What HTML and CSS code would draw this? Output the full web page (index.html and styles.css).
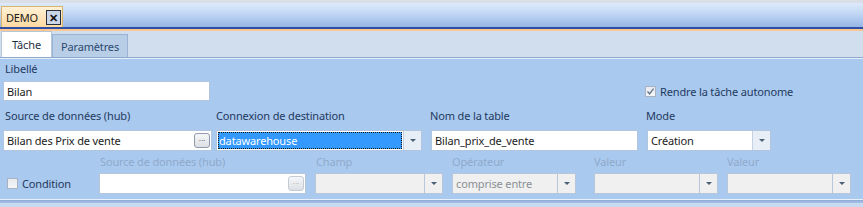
FILE: index.html
```html
<!DOCTYPE html>
<html lang="fr">
<head>
<meta charset="utf-8">
<link rel="stylesheet" href="styles.css">
</head>
<body>
<div class="doc-bar">
  <div class="doc-tab"><span class="doc-title">DEMO</span><span class="doc-close">✕</span></div>
</div>
<div class="doc-line"></div>
<div class="tab-strip">
  <div class="tab active">Tâche</div>
  <div class="tab">Paramètres</div>
</div>
<div class="panel">
  <div class="row lbl-row1"><span class="lbl">Libellé</span></div>
  <div class="row in-row1">
    <div class="field w-libelle"><span class="val">Bilan</span></div>
    <label class="check autonome"><span class="box checked"><svg viewBox="0 0 9 9" width="9" height="9"><path d="M1.5 4.5 L3.6 6.8 L7.6 1.6" fill="none" stroke="#6b7a8f" stroke-width="1.4"/></svg></span><span class="check-text">Rendre la tâche autonome</span></label>
  </div>
  <div class="row lbl-row2">
    <span class="lbl c1">Source de données (hub)</span>
    <span class="lbl c2">Connexion de destination</span>
    <span class="lbl c3">Nom de la table</span>
    <span class="lbl c4">Mode</span>
  </div>
  <div class="row in-row2">
    <div class="field w-source"><span class="val">Bilan des Prix de vente</span><span class="ellipsis">...</span></div>
    <div class="field combo w-conn"><span class="val sel">datawarehouse</span><span class="drop"><i class="arrow"></i></span></div>
    <div class="field w-table"><span class="val">Bilan_prix_de_vente</span></div>
    <div class="field combo w-mode"><span class="val">Création</span><span class="drop"><i class="arrow"></i></span></div>
  </div>
  <div class="row lbl-row3">
    <span class="lbl dis d1">Source de données (hub)</span>
    <span class="lbl dis d2">Champ</span>
    <span class="lbl dis d3">Opérateur</span>
    <span class="lbl dis d4">Valeur</span>
    <span class="lbl dis d5">Valeur</span>
  </div>
  <div class="row in-row3">
    <label class="check condition"><span class="box"></span><span class="check-text">Condition</span></label>
    <div class="field w-csource"><span class="ellipsis dis-btn">...</span></div>
    <div class="field combo disabled w-champ"><span class="val"></span><span class="drop"><i class="arrow"></i></span></div>
    <div class="field combo disabled w-op"><span class="val dis-val">comprise entre</span><span class="drop"><i class="arrow"></i></span></div>
    <div class="field combo disabled w-v1"><span class="val"></span><span class="drop"><i class="arrow"></i></span></div>
    <div class="field combo disabled w-v2"><span class="val"></span><span class="drop"><i class="arrow"></i></span></div>
  </div>
</div>
<div class="footer">
  <div class="f1"></div>
  <div class="f2"></div>
  <div class="f3"></div>
</div>
</body>
</html>
```
FILE: styles.css
```css
* { box-sizing: border-box; }
html, body { margin: 0; padding: 0; }
body {
  width: 863px;
  height: 207px;
  overflow: hidden;
  background: #aac9ee;
  font-family: "Noto Sans", "Open Sans", sans-serif;
  font-size: 11px;
  letter-spacing: -0.15px;
  color: #1e3a5f;
}
.doc-bar {
  height: 27px;
  border-top: 3px solid #dadee6;
  background: linear-gradient(#dde9fb, #c5d9f5 40%, #95b6e6);
  display: flex;
  align-items: flex-end;
  padding-left: 1px;
}
.doc-tab {
  width: 62px;
  height: 21px;
  display: flex;
  align-items: center;
  background: linear-gradient(#fff1d6, #fdd9a0);
  border: 1px solid #d8b46f;
  border-bottom: none;
  padding-left: 4px;
  gap: 8px;
}
.doc-title { color: #1a1a1a; font-size: 11px; letter-spacing: -0.2px; }
.doc-close {
  width: 15px;
  height: 15px;
  border: 1px solid #262d3b;
  background: #c9d6e8;
  color: #111;
  font-size: 11px;
  font-weight: bold;
  line-height: 13px;
  text-align: center;
}
.doc-line {
  height: 4px;
  border-top: 2px solid #2f4fa5;
  background: #fcc790;
}
.tab-strip {
  height: 27px;
  background: #d0deee;
  border-bottom: 1px solid #8fa9cb;
  display: flex;
  align-items: flex-end;
  padding-left: 1px;
}
.tab {
  height: 23px;
  width: 76px;
  justify-content: center;
  display: flex;
  align-items: center;
  background: #b8cde6;
  border: 1px solid #9ab3d4;
  border-bottom: none;
  color: #2b4a70;
  font-size: 11px;
}
.tab.active {
  height: 26px;
  width: 51px;
  background: #ffffff;
  color: #1e2e44;
  border-color: #b5c7dd;
}
.panel {
  height: 141px;
  border-top: 1px solid #e4eefa;
  display: flex;
  flex-direction: column;
}
.row { display: flex; align-items: center; position: relative; }
.lbl-row1 { height: 22px; padding-left: 5px; padding-bottom: 4px; }
.in-row1 { height: 20px; }
.lbl-row2 { height: 29px; }
.in-row2 { height: 21px; }
.lbl-row3 { height: 22px; padding-bottom: 1px; }
.in-row3 { height: 21px; }
.lbl { white-space: nowrap; }
.lbl.dis { color: #8ea9cb; }
.c1 { margin-left: 5px; width: 211px; }
.c2 { width: 214px; }
.c3 { width: 216px; }
.d1 { margin-left: 100px; width: 216px; }
.d2 { width: 136px; }
.d3 { width: 142px; }
.d4 { width: 133px; }
.field {
  height: 100%;
  background: #ffffff;
  border: 1px solid #b1c5df;
  display: flex;
  align-items: center;
  position: relative;
  color: #1b1b1b;
}
.val { padding-left: 3px; flex: 1; white-space: nowrap; overflow: hidden; }
.w-libelle { margin-left: 3px; width: 207px; }
.autonome { margin-left: 435px; }
.w-source { margin-left: 3px; width: 209px; }
.w-conn { margin-left: 4px; width: 206px; }
.w-table { margin-left: 9px; width: 207px; }
.w-mode { margin-left: 9px; width: 124px; }
.combo .val { align-self: stretch; display: flex; align-items: center; }
.val.sel {
  margin: 1px;
  padding-left: 1px;
  background: #3399ff;
  color: #ffffff;
  outline: 1px dotted #1b1b1b;
  outline-offset: -1px;
}
.drop {
  width: 18px;
  height: 100%;
  border-left: 1px solid #c3d1e3;
  background: #e8eef5;
  display: flex;
  align-items: center;
  justify-content: center;
}
.arrow {
  width: 0;
  height: 0;
  border-left: 3px solid transparent;
  border-right: 3px solid transparent;
  border-top: 3px solid #4a5e78;
}
.ellipsis {
  width: 16px;
  height: 15px;
  margin-right: 1px;
  border: 1px solid #8e9aa9;
  border-radius: 3px;
  background: linear-gradient(#f6f7f9, #dcdfe4);
  font-family: "DejaVu Sans", sans-serif;
  font-size: 7px;
  line-height: 11px;
  text-align: center;
  color: #333;
  letter-spacing: 0;
}
.dis-btn { border-color: #c4ccd6; color: #aaa; margin-left: auto; }
.check { display: flex; align-items: center; gap: 4px; white-space: nowrap; }
.box {
  width: 11px;
  height: 11px;
  border: 1px solid #a7b3c3;
  background: linear-gradient(#e7eaee, #f4f5f7);
  display: flex;
  align-items: center;
  justify-content: center;
}
.check-text { color: #1e3a5f; }
.condition { margin-left: 7px; width: 92px; }
.w-csource { width: 207px; }
.w-csource, .disabled { border-color: #b7c6d8; }
.disabled { background: #f0f0f0; }
.disabled .drop { background: #f0f0f0; border-left-color: #b7c6d8; }
.dis-val { color: #8a8f96; }
.w-champ { margin-left: 9px; width: 128px; }
.w-op { margin-left: 9px; width: 124px; }
.w-v1 { margin-left: 18px; width: 124px; }
.w-v2 { margin-left: 9px; width: 124px; }
.footer { height: 9px; display: flex; flex-direction: column; }
.f1 { height: 1px; background: #e8f1fb; }
.f2 { height: 3px; background: linear-gradient(#8eabd4, #a8c2e6); }
.f3 { flex: 1; background: #c8daf0; }
```
